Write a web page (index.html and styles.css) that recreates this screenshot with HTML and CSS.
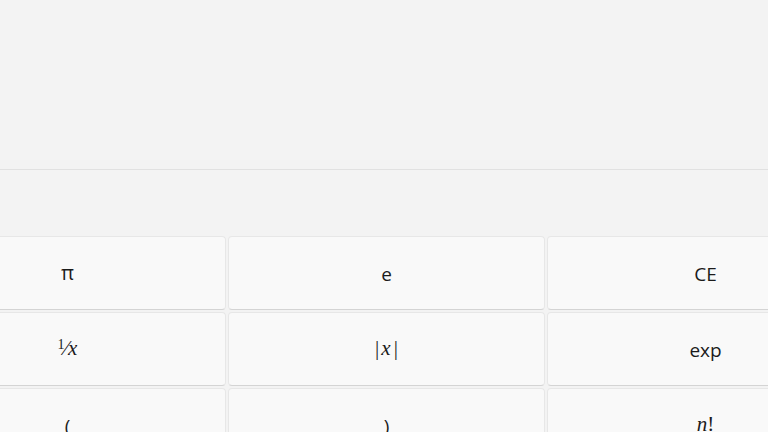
FILE: index.html
```html
<!DOCTYPE html>
<html>
<head>
<meta charset="utf-8">
<link rel="stylesheet" href="styles.css">
</head>
<body>
<div class="app">
  <div class="display"></div>
  <div class="pad">
    <div class="keys">
      <button class="key"><span class="sym">π</span></button>
      <button class="key"><span class="txt">e</span></button>
      <button class="key"><span class="txt">CE</span></button>
      <button class="key"><span class="math"><span class="sup">1</span>⁄<i>x</i></span></button>
      <button class="key"><span class="math abs">|<i>x</i>|</span></button>
      <button class="key"><span class="txt">exp</span></button>
      <button class="key"><span class="txt">(</span></button>
      <button class="key"><span class="txt">)</span></button>
      <button class="key"><span class="math"><i>n</i>!</span></button>
    </div>
  </div>
</div>
</body>
</html>
```

FILE: styles.css
```css
html, body {
  margin: 0;
  padding: 0;
  width: 768px;
  height: 432px;
  overflow: hidden;
  background: #f3f3f3;
}
.app {
  display: flex;
  flex-direction: column;
  height: 432px;
  font-family: "Open Sans", "Noto Sans", sans-serif;
  color: #1b1b1b;
}
.display {
  height: 169px;
  flex: none;
  border-bottom: 1px solid #e1e1e1;
  background: #f3f3f3;
}
.pad {
  padding-top: 66px;
  overflow: hidden;
}
.keys {
  display: grid;
  grid-template-columns: repeat(3, 317px);
  grid-auto-rows: 74px;
  gap: 2px;
  margin-left: -91px;
}
.key {
  display: flex;
  align-items: center;
  justify-content: center;
  margin: 0;
  padding: 0;
  background: #f9f9f9;
  border: 1px solid #e7e7e7;
  border-bottom-color: #d4d4d4;
  border-radius: 4px;
  font-family: inherit;
  color: inherit;
}
.txt {
  font-size: 19px;
  line-height: 1;
  margin-top: 3px;
}
.sym {
  font-size: 20px;
  line-height: 1;
  margin-top: -1px;
}
.math {
  font-family: "Liberation Serif", "DejaVu Serif", serif;
  font-size: 21px;
  line-height: 1;
  margin-top: -2px;
}
.math i {
  font-style: italic;
}
.abs i {
  padding: 0 3px 0 2px;
}
.sup {
  font-size: 14px;
  vertical-align: 6px;
}
```
